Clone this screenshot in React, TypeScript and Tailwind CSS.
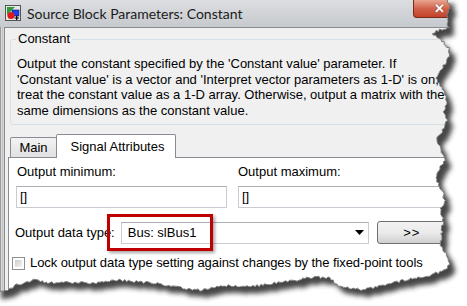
import React from "react";

function rng(seed: number) {
  let s = seed;
  return () => {
    s = (s * 16807) % 2147483647;
    return (s - 1) / 2147483646;
  };
}

const edgePts: [number, number][] = [
  [448, -3], [449, 10], [447, 20], [449, 27], [440, 30], [433, 33], [437, 37], [444, 42],
  [450, 50], [448, 58], [444, 66], [436, 78], [440, 86], [446, 95], [446, 104], [443, 112],
  [447, 120], [443, 130], [437, 140], [441, 150], [445, 160], [438, 170], [436, 180],
  [442, 190], [445, 200], [440, 210], [443, 218], [442, 230], [441, 245], [447, 255],
  [450, 265], [440, 272], [430, 275], [397, 282], [363, 290], [340, 287], [330, 278],
  [313, 277], [297, 280], [280, 282], [263, 285], [247, 287], [230, 285], [217, 287],
  [200, 290], [183, 288], [167, 285], [140, 282], [117, 280], [100, 283], [83, 283],
  [67, 282], [50, 283], [33, 280], [17, 285], [7, 290], [-3, 292],
];

function jag(points: [number, number][], seed: number) {
  const r = rng(seed);
  const out: [number, number][] = [];
  for (let i = 0; i < points.length - 1; i++) {
    const [x0, y0] = points[i];
    const [x1, y1] = points[i + 1];
    const dx = x1 - x0;
    const dy = y1 - y0;
    const len = Math.hypot(dx, dy);
    const steps = Math.max(1, Math.round(len / 2));
    for (let k = 0; k < steps; k++) {
      const t = k / steps;
      const off = i === 0 && k === 0 ? 0 : (r() - 0.5) * 2.6;
      out.push([x0 + dx * t + (-dy / len) * off, y0 + dy * t + (dx / len) * off]);
    }
  }
  out.push(points[points.length - 1]);
  return out;
}

const edge = jag(edgePts, 12345);
const edgeStr = edge.map(([x, y]) => `${x.toFixed(1)},${y.toFixed(1)}`).join(" L");
const closedPath = `M-5,-5 L${edgeStr} L-5,292 Z`;
const openPath = `M${edgeStr}`;

function SourceIcon() {
  return (
    <svg width="16" height="16" viewBox="0 0 16 16">
      <rect x="0.5" y="0.5" width="15" height="15" fill="#e8e8e8" stroke="#555" />
      <polygon points="2,2 10,2 2,10" fill="#2e9b3a" />
      <rect x="7" y="5" width="7" height="6" fill="#1f3fe0" stroke="#0a1a80" strokeWidth="0.6" />
      <circle cx="6" cy="10.5" r="3.6" fill="#e01818" />
      <path d="M9.5 13 H14 M11.7 10.8 V15" stroke="#000" strokeWidth="1.2" />
    </svg>
  );
}

export default function App() {
  return (
    <div className="relative w-[467px] h-[306px] overflow-hidden bg-white font-['Liberation_Sans',Arial,sans-serif] text-[13px] text-black">
      <svg className="absolute left-0 top-0" width="467" height="306">
        <defs>
          <filter id="blur" x="-10%" y="-10%" width="120%" height="120%">
            <feGaussianBlur stdDeviation="2.6" />
          </filter>
          <clipPath id="torn" clipPathUnits="userSpaceOnUse">
            <path d={closedPath} />
          </clipPath>
        </defs>
        <path d={closedPath} transform="translate(6,7)" fill="#303030" opacity="0.9" filter="url(#blur)" />
      </svg>

      <div className="relative w-[467px] h-[306px] flex flex-col bg-[#f0f0f0] [clip-path:url(#torn)]">
        {/* title bar */}
        <div className="h-[27px] flex items-start bg-gradient-to-b from-[#dcdee1] to-[#c6c9cd] shrink-0">
          <div className="ml-[5px] mt-[5px] w-[16px] h-[16px]">
            <SourceIcon />
          </div>
          <span className="ml-[6px] mt-[5px] text-[14px] leading-[17px] text-[#1b1b1b] font-['Lato',sans-serif]">
            Source Block Parameters: Constant
          </span>
          <div className="ml-auto mr-[12px] w-[42px] h-[18px] rounded-b-[4px] border border-t-0 border-[#7a2a1c] bg-gradient-to-b from-[#e9a592] via-[#d2624b] to-[#c2422b] flex items-center justify-start pl-[20px]">
            <span className="text-white text-[13px] font-bold leading-none [text-shadow:0_0_1px_#5a1a10]">✕</span>
          </div>
        </div>

        {/* body */}
        <div className="flex flex-1">
          <div className="w-[4px] flex shrink-0">
            <div className="w-[1px] bg-[#9a9a9a]" />
            <div className="w-[1px] bg-[#dcdcdc]" />
            <div className="w-[1px] bg-[#c2c2c2]" />
            <div className="w-[1px] bg-[#d4d4d4]" />
          </div>
          <div className="flex-1 flex flex-col border-l border-t border-[#8c8c8c] bg-[#f0f0f0] relative">
            {/* group box */}
            <div className="relative mt-[11px] ml-[5px] w-[470px] h-[86px] border border-[#d5dfe5] rounded-[3px] shrink-0">
              <span className="absolute left-[5px] -top-[9px] px-[2px] bg-[#f0f0f0] leading-[16px]">Constant</span>
              <p className="pt-[16px] pl-[6px] leading-[15.7px] whitespace-nowrap">
                Output the constant specified by the 'Constant value' parameter. If
                <br />
                'Constant value' is a vector and 'Interpret vector parameters as 1-D' is on,
                <br />
                treat the constant value as a 1-D array. Otherwise, output a matrix with the
                <br />
                same dimensions as the constant value.
              </p>
            </div>

            {/* tabs */}
            <div className="flex items-end ml-[3px] mt-[9px] h-[23px] shrink-0 relative z-10">
              <div className="ml-[2px] w-[47px] h-[20px] border border-b-0 border-[#898c95] rounded-t-[2px] bg-gradient-to-b from-[#f3f3f3] to-[#e1e1e1] flex items-center justify-center pt-[1px] leading-[16px]">
                Main
              </div>
              <div className="-ml-[1px] w-[120px] h-[24px] -mb-[1px] border border-b-0 border-[#898c95] rounded-t-[2px] bg-white flex items-center justify-center pl-[3px] leading-[16px]">
                Signal Attributes
              </div>
            </div>

            {/* tab panel */}
            <div className="ml-[3px] flex-1 border border-[#898c95] bg-white flex flex-col relative">
              <div className="flex mt-[6px]">
                <div className="ml-[7px] w-[211px] flex flex-col">
                  <span className="leading-[16px] pl-[1px]">Output minimum:</span>
                  <div className="mt-[6px] h-[22px] border border-[#c9ccd3] border-t-[#abadb3] pl-[3px] flex items-center leading-[16px]">
                    []
                  </div>
                </div>
                <div className="ml-[11px] w-[240px] flex flex-col">
                  <span className="leading-[16px]">Output maximum:</span>
                  <div className="mt-[6px] h-[22px] border border-[#c9ccd3] border-t-[#abadb3] pl-[3px] flex items-center leading-[16px]">
                    []
                  </div>
                </div>
              </div>

              <div className="flex items-center mt-[13px] h-[23px]">
                <span className="ml-[6px] leading-[16px]">Output data type:</span>
                <div className="ml-[6px] w-[248px] h-[22px] border border-[#c9ccd3] border-t-[#abadb3] bg-white flex items-center pl-[6px] leading-[16px]">
                  <span className="flex-1">Bus: slBus1</span>
                  <svg width="9" height="5" viewBox="0 0 9 5" className="mr-[4px]">
                    <polygon points="0,0 9,0 4.5,5" fill="#000" />
                  </svg>
                </div>
                <div className="ml-[8px] w-[70px] h-[23px] rounded-[3px] border border-[#707070] bg-gradient-to-b from-[#f2f2f2] via-[#ebebeb] to-[#cfcfcf] flex items-center justify-center leading-[16px] tracking-[1px]">
                  &gt;&gt;
                </div>
              </div>

              <div className="flex items-center mt-[11px]">
                <div className="ml-[3px] w-[13px] h-[13px] border border-[#8e8f8f] bg-white p-[2px]">
                  <div className="w-full h-full bg-gradient-to-br from-[#cbcbcb] to-[#f4f4f4]" />
                </div>
                <span className="ml-[5px] leading-[16px] whitespace-nowrap tracking-[-0.08px]">
                  Lock output data type setting against changes by the fixed-point tools
                </span>
              </div>
            </div>
          </div>
        </div>

        {/* red highlight */}
        <div className="absolute left-[107px] top-[214px] w-[106px] h-[37px] border-[3px] border-[#c00000] shadow-[2px_2px_3px_rgba(0,0,0,0.35)]" />
      </div>

      <svg className="absolute left-0 top-0 pointer-events-none" width="467" height="306">
        <path d={openPath} fill="none" stroke="#6f6f6f" strokeWidth="0.9" />
      </svg>
    </div>
  );
}
